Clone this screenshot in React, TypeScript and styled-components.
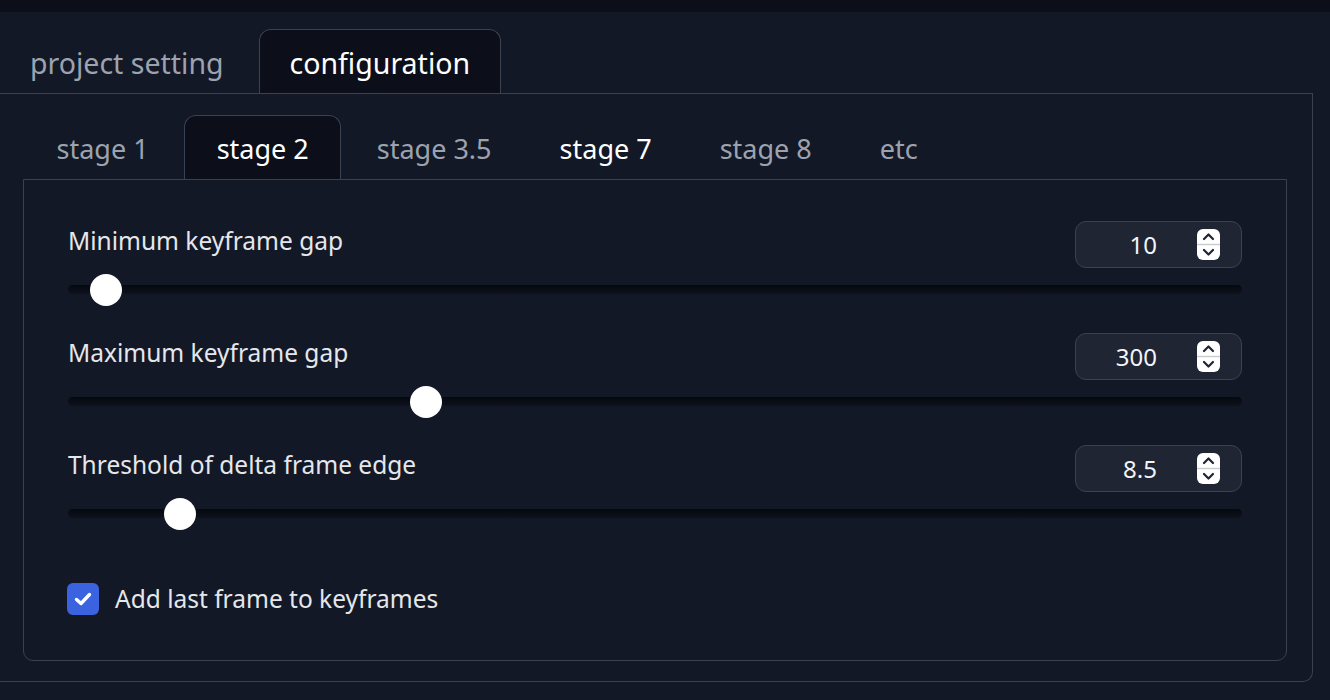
import React from "react";
import styled, { createGlobalStyle } from "styled-components";

const Global = createGlobalStyle`
  html, body { margin: 0; padding: 0; background: #131826; }
  body { font-family: "Noto Sans", "Open Sans", sans-serif; overflow: hidden; }
  * { box-sizing: border-box; }
`;

const Page = styled.div`
  width: 1330px;
  height: 700px;
  background: #131826;
  display: flex;
  flex-direction: column;
`;

const TopStrip = styled.div`
  height: 12px;
  background: #0c0f19;
  flex: none;
`;

const Outer = styled.div`
  padding-top: 17px;
  width: 1313px;
  display: flex;
  flex-direction: column;
`;

const TabNav = styled.div<{ $gap: number; $offset: number }>`
  display: flex;
  gap: ${(p) => p.$gap}px;
  margin-left: ${(p) => p.$offset}px;
  height: 64px;
  position: relative;
  z-index: 1;
`;

const Tab = styled.div<{ $active?: boolean; $bright?: boolean; $size: number; $pad: number }>`
  height: 64px;
  padding: 2px ${(p) => p.$pad}px 0;
  display: flex;
  align-items: center;
  font-size: ${(p) => p.$size}px;
  color: ${(p) => (p.$active || p.$bright ? "#ffffff" : "#9ca3af")};
  border: 1.5px solid ${(p) => (p.$active ? "#3a4151" : "transparent")};
  border-bottom: none;
  border-radius: 12px 12px 0 0;
  background: ${(p) => (p.$active ? "#0c0f19" : "transparent")};
  margin-bottom: ${(p) => (p.$active ? "-1.5px" : "0")};
  white-space: nowrap;
`;

const OuterPanel = styled.div`
  border: 1.5px solid #3a4151;
  border-left: none;
  border-radius: 0 0 10px 0;
  height: 589px;
  padding: 21px 25px 20px 23px;
  display: flex;
  flex-direction: column;
`;

const InnerPanel = styled.div`
  border: 1.5px solid #3a4151;
  border-radius: 0 0 10px 10px;
  border-top-right-radius: 0;
  height: 482px;
  padding: 40px 44px 0 44px;
  display: flex;
  flex-direction: column;
`;

const SliderBlock = styled.div`
  display: flex;
  flex-direction: column;
  height: 112px;
`;

const Header = styled.div`
  display: flex;
  align-items: center;
  justify-content: space-between;
  height: 48px;
`;

const Label = styled.span`
  font-size: 24.5px;
  color: #e5e7eb;
  margin-top: -8px;
`;

const NumberBox = styled.div`
  width: 167px;
  height: 47px;
  border: 1.5px solid #3a4151;
  border-radius: 11px;
  background: #1f2533;
  display: flex;
  align-items: center;
  justify-content: flex-end;
  padding-right: 21px;
  gap: 40px;
  font-size: 24px;
  color: #f3f4f6;
`;

const Track = styled.div`
  position: relative;
  height: 9px;
  margin-top: 17px;
  border-radius: 5px;
  background: linear-gradient(#06080f, #0e121d);
`;

const Thumb = styled.div`
  position: absolute;
  top: 50%;
  width: 32px;
  height: 32px;
  margin-left: -16px;
  margin-top: -16px;
  border-radius: 50%;
  background: #ffffff;
`;

const CheckRow = styled.label`
  display: flex;
  align-items: center;
  gap: 16px;
  margin-top: 26px;
  margin-left: -1px;
  font-size: 24.5px;
  color: #e5e7eb;
`;

const CheckBox = styled.span`
  width: 32px;
  height: 32px;
  border-radius: 6px;
  background: #3b63e0;
  display: flex;
  align-items: center;
  justify-content: center;
`;

const Spinner = () => (
  <svg width="23" height="31" viewBox="0 0 23 31">
    <rect x="0" y="0" width="23" height="31" rx="6" fill="#ffffff" />
    <line x1="0" y1="15.5" x2="23" y2="15.5" stroke="#c9ccd2" strokeWidth="1.5" />
    <path d="M7 10 L11.5 5.5 L16 10" fill="none" stroke="#1f2533" strokeWidth="2.2" strokeLinecap="round" strokeLinejoin="round" />
    <path d="M7 21 L11.5 25.5 L16 21" fill="none" stroke="#1f2533" strokeWidth="2.2" strokeLinecap="round" strokeLinejoin="round" />
  </svg>
);

const sliders = [
  { label: "Minimum keyframe gap", value: "10", pos: 38 },
  { label: "Maximum keyframe gap", value: "300", pos: 358 },
  { label: "Threshold of delta frame edge", value: "8.5", pos: 112 },
];

const stages = ["stage 1", "stage 2", "stage 3.5", "stage 7", "stage 8", "etc"];

export default function App() {
  return (
    <Page>
      <Global />
      <TopStrip />
      <Outer>
        <TabNav $gap={4} $offset={-1}>
          <Tab $size={28.5} $pad={30}>project setting</Tab>
          <Tab $size={28.5} $pad={30} $active>configuration</Tab>
        </TabNav>
        <OuterPanel>
          <TabNav $gap={3} $offset={1}>
            {stages.map((s) => (
              <Tab key={s} $size={27} $pad={31.5} $active={s === "stage 2"} $bright={s === "stage 7"}>
                {s}
              </Tab>
            ))}
          </TabNav>
          <InnerPanel>
            {sliders.map((s) => (
              <SliderBlock key={s.label}>
                <Header>
                  <Label>{s.label}</Label>
                  <NumberBox>
                    <span>{s.value}</span>
                    <Spinner />
                  </NumberBox>
                </Header>
                <Track>
                  <Thumb style={{ left: s.pos }} />
                </Track>
              </SliderBlock>
            ))}
            <CheckRow>
              <CheckBox>
                <svg width="20" height="16" viewBox="0 0 20 16">
                  <path d="M3.5 8.5 L8 12.5 L16.5 3.5" fill="none" stroke="#fff" strokeWidth="3.4" strokeLinecap="round" strokeLinejoin="round" />
                </svg>
              </CheckBox>
              Add last frame to keyframes
            </CheckRow>
          </InnerPanel>
        </OuterPanel>
      </Outer>
    </Page>
  );
}
